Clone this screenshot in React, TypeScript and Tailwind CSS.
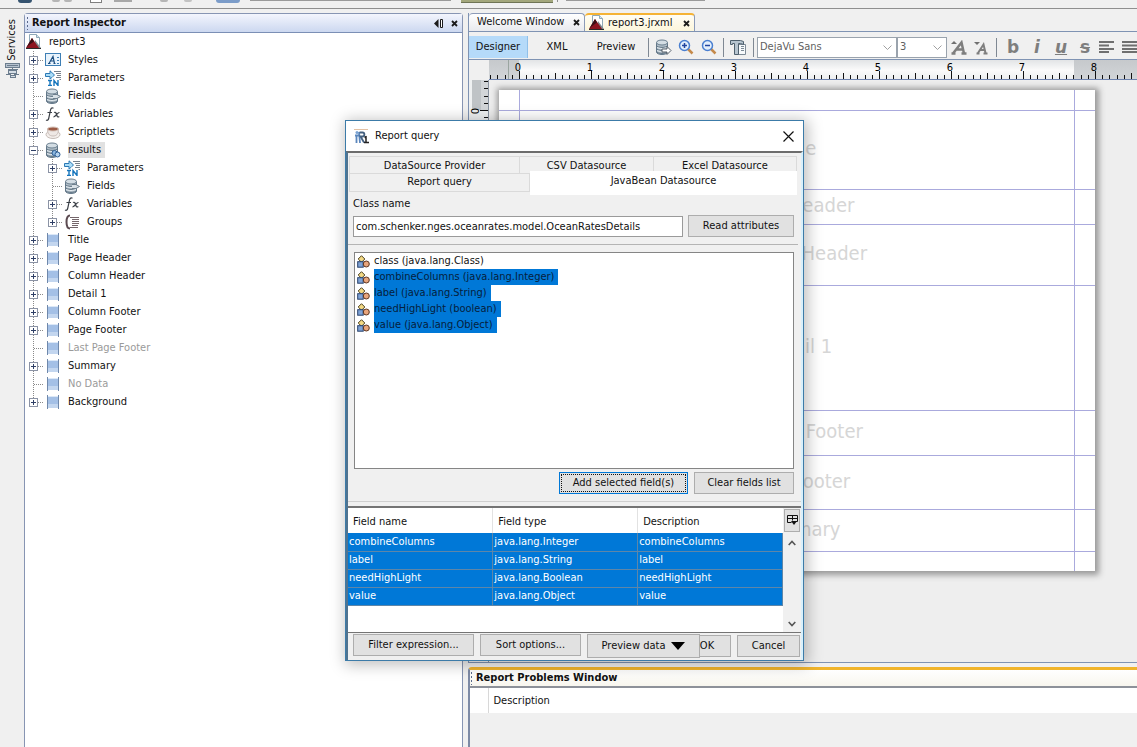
import React from 'react';
import { clsx } from 'clsx';

type IconName =
  | 'report' | 'styles' | 'params' | 'fields' | 'vars' | 'scriptlets' | 'dataset' | 'groups' | 'band';

interface TreeNode {
  label: string;
  icon: IconName;
  level: 1 | 2;
  box?: 'plus' | 'minus';
  last?: boolean;
  selected?: boolean;
  muted?: boolean;
}

const NODES: TreeNode[] = [
  { label: 'Styles', icon: 'styles', level: 1, box: 'plus' },
  { label: 'Parameters', icon: 'params', level: 1, box: 'plus' },
  { label: 'Fields', icon: 'fields', level: 1 },
  { label: 'Variables', icon: 'vars', level: 1, box: 'plus' },
  { label: 'Scriptlets', icon: 'scriptlets', level: 1, box: 'plus' },
  { label: 'results', icon: 'dataset', level: 1, box: 'minus', selected: true },
  { label: 'Parameters', icon: 'params', level: 2, box: 'plus' },
  { label: 'Fields', icon: 'fields', level: 2 },
  { label: 'Variables', icon: 'vars', level: 2, box: 'plus' },
  { label: 'Groups', icon: 'groups', level: 2, box: 'plus', last: true },
  { label: 'Title', icon: 'band', level: 1, box: 'plus' },
  { label: 'Page Header', icon: 'band', level: 1, box: 'plus' },
  { label: 'Column Header', icon: 'band', level: 1, box: 'plus' },
  { label: 'Detail 1', icon: 'band', level: 1, box: 'plus' },
  { label: 'Column Footer', icon: 'band', level: 1, box: 'plus' },
  { label: 'Page Footer', icon: 'band', level: 1, box: 'plus' },
  { label: 'Last Page Footer', icon: 'band', level: 1, muted: true },
  { label: 'Summary', icon: 'band', level: 1, box: 'plus' },
  { label: 'No Data', icon: 'band', level: 1, muted: true },
  { label: 'Background', icon: 'band', level: 1, box: 'plus', last: true },
];

const ATTRIBUTES = [
  { label: 'class (java.lang.Class)', selected: false },
  { label: 'combineColumns (java.lang.Integer)', selected: true },
  { label: 'label (java.lang.String)', selected: true },
  { label: 'needHighLight (boolean)', selected: true },
  { label: 'value (java.lang.Object)', selected: true },
];

const FIELDS = [
  ['combineColumns', 'java.lang.Integer', 'combineColumns'],
  ['label', 'java.lang.String', 'label'],
  ['needHighLight', 'java.lang.Boolean', 'needHighLight'],
  ['value', 'java.lang.Object', 'value'],
];

const BANDS = [
  { label: '', height: 'h-[21px]' },
  { label: 'Title', height: 'h-[79px]' },
  { label: 'Page Header', height: 'h-[35px]' },
  { label: 'Column Header', height: 'h-[61px]' },
  { label: 'Detail 1', height: 'h-[125px]' },
  { label: 'Column Footer', height: 'h-[45px]' },
  { label: 'Page Footer', height: 'h-[54px]' },
  { label: 'Summary', height: 'h-[42px]' },
];

const Cylinder: React.FC = () => (
  <>
    <path d="M1.5 3.5v9.5c0 1.500 2.500 2.500 5.500 2.500s5.500-1 5.500-2.500V3.500" fill="#b3c0ca" stroke="#64798a" />
    <path d="M1.500 6.500c1 2.500 10 2.500 11 0M1.500 9.500c1 2.500 10 2.500 11 0M1.500 12.500c1 2.500 10 2.500 11 0" fill="none" stroke="#5b7080" />
    <path d="M2 8c1 2 9 2 10 0M2 11c1 2 9 2 10 0" fill="none" stroke="#e4ebf0" />
    <ellipse cx="7" cy="3.500" rx="5.500" ry="2.500" fill="#d3dde4" stroke="#6a7e8e" />
  </>
);

const Icon: React.FC<{ name: IconName }> = ({ name }) => (
  <svg width="16" height="16" viewBox="0 0 16 16" className="shrink-0" aria-hidden="true">
    {name === 'report' && (
      <>
        <path d="M3.500.5h7l3 3v11h-10z" fill="#fff" stroke="#8fa9b8" />
        <path d="M10.500.5v3h3" fill="#d5e5ee" stroke="#8fa9b8" />
        <path d="M9 6l6 8H8z" fill="#7f8b8f" />
        <path d="M0 14L6 4l7 10z" fill="#8c1420" />
        <path d="M0 14L6 4l2 3.500L3 11z" fill="#3a1016" />
        <path d="M0 14.500h15" stroke="#2a2a2a" />
      </>
    )}
    {name === 'styles' && (
      <>
        <rect x=".5" y="1.500" width="15" height="12" fill="#e8f3fc" stroke="#3e7fb5" />
        <path d="M3 11.500h2.500M4 11.500L8 4.500l1.500 7M5.500 9h3.500M8.500 11.500h2" fill="none" stroke="#1d4f80" strokeWidth="1.200" />
        <path d="M12 5.500h2M12 8.500h2M12 11.500h2" stroke="#3e7fb5" />
      </>
    )}
    {name === 'params' && (
      <>
        <path d="M9 1.500h7M11 3.500h5M12 5.500h4M11 7.500h5M14.500 9.500h1.500" stroke="#77818c" />
        <path d="M.5 3.500h4.500V.8L9.500 5 5 9.200V6.500H.5z" fill="#a9dcf7" stroke="#2b78b5" />
        <path d="M3 10.500h4M5 10.500v5M3 15.500h4M9 15.500v-5l4 5v-5" fill="none" stroke="#fff" strokeWidth="3" />
        <path d="M3 10.500h4M5 10.500v5M3 15.500h4M9 16v-5.500l4 5v-5.500" fill="none" stroke="#1575bd" strokeWidth="1.400" />
      </>
    )}
    {name === 'fields' && (
      <>
        <Cylinder />
        <path d="M8 6.500h4l3.500 2-3.500 2H8" fill="#d9e1e7" stroke="#6d7f8d" />
      </>
    )}
    {name === 'vars' && (
      <path
        d="M8.500 2.200c-2-1-2.700.3-3.200 2.800l-1.500 7c-.4 1.800-1.200 2.800-2.800 2M2.500 6.500h4.500M9 6.500c2-.8 2 .5 2.700 2.500s1 2.500 2.600 1.500M14.500 6.500c-2-.5-3.500 4.500-6 4.300"
        fill="none"
        stroke="#3a3f46"
        strokeWidth="1.200"
      />
    )}
    {name === 'scriptlets' && (
      <>
        <ellipse cx="8" cy="10.500" rx="7" ry="4" fill="#f4efec" stroke="#c6bdb8" />
        <path d="M2.500 5c0 5 2 7 5.500 7s5.500-2 5.500-7z" fill="#eee8e5" stroke="#c9beb9" />
        <ellipse cx="8" cy="5" rx="5.500" ry="2" fill="#9c5b45" stroke="#d6c5bc" />
      </>
    )}
    {name === 'dataset' && (
      <>
        <Cylinder />
        <circle cx="9.500" cy="11" r="2.500" fill="#8db8e0" stroke="#2c5d94" />
        <circle cx="12.500" cy="12.500" r="2.500" fill="#b5d3ee" stroke="#2c5d94" />
      </>
    )}
    {name === 'groups' && (
      <>
        <path d="M6 1.500C3.500 1.500 2.500 3 2.500 8s1 6.500 3.500 6.500" fill="none" stroke="#5b4a50" strokeWidth="2" />
        <path d="M6 3.500h9M8 5.500h7M8 7.500h7M8 9.500h7M8 11.500h6M6 13.500h8" stroke="#74666b" />
      </>
    )}
    {name === 'band' && (
      <>
        <rect x="2" y="2" width="12" height="12" fill="#a4c0e6" />
        <path d="M2 2.500h12" stroke="#dce8f7" />
        <path d="M2 12h12" stroke="#c3d6ef" strokeWidth="4" />
        <path d="M2.500 1v14M13.500 1v14" stroke="#6f88ab" />
      </>
    )}
  </svg>
);

const Guide: React.FC<{ box?: 'plus' | 'minus'; branch?: boolean; last?: boolean }> = ({ box, branch, last }) => (
  <svg width="19" height="18" className="shrink-0" shapeRendering="crispEdges" aria-hidden="true">
    <path d={last ? 'M8.500 0v9' : 'M8.500 0v18'} stroke="#8a8a8a" strokeDasharray="1 1" />
    {branch && <path d="M9 9.500h10" stroke="#8a8a8a" strokeDasharray="1 1" />}
    {box && (
      <>
        <rect x="4.500" y="5.500" width="8" height="8" fill="#fff" stroke="#8b93a5" />
        <path d={box === 'plus' ? 'M6 9.500h5M8.500 7v5' : 'M6 9.500h5'} stroke="#2f3f66" />
      </>
    )}
  </svg>
);

const TreeRow: React.FC<{ node: TreeNode }> = ({ node }) => (
  <li className="flex h-[18px] items-center">
    {node.level === 2 && <Guide />}
    <Guide box={node.box} branch last={node.last} />
    <span className="w-6 shrink-0 pl-px">
      <Icon name={node.icon} />
    </span>
    <span className={clsx('leading-4', node.selected && 'bg-[#e1e1e1] pr-1', node.muted && 'text-[#9a9a9a]')}>
      {node.label}
    </span>
  </li>
);

const CloseGlyph: React.FC = () => (
  <svg width="7" height="7" aria-hidden="true">
    <path d="M1 1l5 5M6 1L1 6" stroke="#1b1b1b" strokeWidth="1.800" />
  </svg>
);

const Grip: React.FC = () => (
  <svg width="4" height="14" shapeRendering="crispEdges" className="shrink-0" aria-hidden="true">
    <path d="M1.500 1v13" stroke="#5b6a8c" strokeDasharray="2 2" />
  </svg>
);

const TopToolbar: React.FC = () => (
  <div className="flex h-[9px] shrink-0 items-start border-b border-[#8f8f8f] pl-[18px]">
    <div className="h-[3px] w-[14px] rounded-b bg-[#35536f]" />
    <div className="ml-5 h-[2px] w-2 rounded-b bg-[#b5b5b5]" />
    <div className="ml-1 h-[2px] w-2 rounded-b bg-[#b5b5b5]" />
    <div className="ml-[18px] h-[3px] w-[12px] border border-t-0 border-[#808080] bg-white" />
    <div className="ml-3 h-[2px] w-[18px] bg-[#a8a8a8]" />
    <div className="ml-7 h-[2px] w-2 rounded-b bg-[#b5b5b5]" />
    <div className="ml-4 h-[2px] w-2 rounded-b bg-[#c2c2c2]" />
    <div className="ml-6 h-[3px] w-[24px] rounded-b bg-[#7b9cc9]" />
    <div className="ml-[10px] h-px w-[201px] bg-[#9a9a9a]" />
    <div className="ml-[10px] h-[3px] w-[92px] border-b border-[#6f7556] bg-[#a3a77c]" />
    <div className="ml-1 h-[2px] w-px bg-[#8f8f8f]" />
    <div className="ml-2 h-px w-[139px] bg-[#9a9a9a]" />
  </div>
);

const ServicesBar: React.FC = () => (
  <aside className="flex w-6 shrink-0 flex-col items-center gap-[2px] pt-[10px]">
    <button className="rotate-180 leading-4 [writing-mode:vertical-rl]">Services</button>
    <svg width="15" height="16" shapeRendering="crispEdges" aria-hidden="true">
      <path d="M.5.500h14v4h-14z" fill="#b6c2cf" stroke="#6c7d8e" />
      <path d="M2 2.500h11M2.500 6.500h10M7.500 5v6" stroke="#6c7d8e" />
      <path d="M3.500 7.500h8v3h-8zM5.500 12.500h5v2h-5zM1 11.500h5M9 11.500h5" fill="#d6dee6" stroke="#6c7d8e" />
    </svg>
  </aside>
);

const Inspector: React.FC = () => (
  <section className="mt-1 flex w-[439px] shrink-0 flex-col rounded-t border border-b-0 border-[#8795b3] bg-white">
    <header className="flex h-[19px] shrink-0 items-center border-b border-[#7b8fb5] bg-gradient-to-b from-[#f3f5fd] to-[#ccd8f0] pr-1 pl-px">
      <Grip />
      <h2 className="ml-[2px] flex-1 font-bold">Report Inspector</h2>
      <button aria-label="Minimize" className="mr-2">
        <svg width="9" height="9" aria-hidden="true">
          <path d="M4.500 0v9L0 4.500z" fill="#1b1b1b" />
          <path d="M6.500.500h2v8h-2z" fill="#fff" stroke="#1b1b1b" />
        </svg>
      </button>
      <button aria-label="Close inspector"><CloseGlyph /></button>
    </header>
    <ul>
      <li className="flex h-[18px] items-center">
        <span className="w-6 shrink-0 pl-px"><Icon name="report" /></span>
        report3
      </li>
      {NODES.map((node, i) => <TreeRow key={i} node={node} />)}
    </ul>
  </section>
);

const Divider: React.FC = () => <span className="h-[19px] w-px shrink-0 bg-[#7f8893]" />;

const Zoomer: React.FC<{ plus?: boolean }> = ({ plus }) => (
  <svg width="16" height="16" aria-hidden="true">
    <path d="M9.500 9.500l5 5" stroke="#c58a4b" strokeWidth="2.500" />
    <circle cx="6.500" cy="6.500" r="5" fill="#e3effc" stroke="#4a7fd0" strokeWidth="1.500" />
    <path d={plus ? 'M4 6.500h5M6.500 4v5' : 'M4 6.500h5'} stroke="#2145a0" strokeWidth="1.500" />
  </svg>
);

const Picker: React.FC<{ label: string; value: string; className: string }> = ({ label, value, className }) => (
  <div className={clsx('relative h-[21px] shrink-0', className)}>
    <select
      aria-label={label}
      defaultValue={value}
      className="h-full w-full appearance-none border border-[#9aa3ad] bg-white pl-[2px] text-[#5f5f5f]"
    >
      <option>{value}</option>
    </select>
    <svg width="9" height="6" className="pointer-events-none absolute top-2 right-[5px]" aria-hidden="true">
      <path d="M.5.500l4 4 4-4" fill="none" stroke="#a0a0a0" />
    </svg>
  </div>
);

const glyphButton = 'w-6 shrink-0 text-center font-["DejaVu_Sans"] text-[17px] leading-5 font-bold text-[#7e7e7e]';

const DesignerToolbar: React.FC = () => (
  <div className="flex h-[29px] shrink-0 items-center overflow-hidden border-y border-[#7f93b3] bg-[#f0f0f0] pt-[3px]">
    <button className="h-[22px] w-[59px] shrink-0 border-r border-[#8fc0ea] bg-[#b5daf9]">Designer</button>
    <button className="h-[22px] w-[58px] shrink-0">XML</button>
    <button className="h-[22px] w-[60px] shrink-0">Preview</button>
    <div className="flex shrink-0 items-center pl-[2px]">
      <Divider />
      <button aria-label="Report query" className="ml-[6px]">
        <svg width="17" height="16" viewBox="0 0 17 16" aria-hidden="true">
          <Cylinder />
          <path d="M7 10h5V7.500l4 4-4 4V13H7z" fill="#fff" stroke="#555f69" />
        </svg>
      </button>
      <button aria-label="Zoom in" className="ml-[6px]"><Zoomer plus /></button>
      <button aria-label="Zoom out" className="mr-[6px] ml-[7px]"><Zoomer /></button>
      <Divider />
      <button aria-label="Format tools" className="mx-[6px]">
        <svg width="17" height="17" aria-hidden="true">
          <path d="M7.500 5.500h8v10h-8z" fill="#f7fafc" stroke="#7d8a96" />
          <path d="M.5 1.500h10l3 1v3l-3-1h-2v11h-4v-11h-2v1h-2z" fill="#b7c5d0" stroke="#4e606e" />
          <path d="M11 7.500h3M11 9.500h3M11 11.500h3" stroke="#7d8a96" />
        </svg>
      </button>
      <Divider />
    </div>
    <div className="ml-[3px] flex shrink-0">
      <Picker label="Font" value="DejaVu Sans" className="w-[140px]" />
      <Picker label="Size" value="3" className="w-[50px]" />
    </div>
    <button aria-label="Increase font size" className="ml-[4px] w-[18px] shrink-0">
      <svg width="16" height="15" aria-hidden="true">
        <path d="M0 4l3-3 3 3z" fill="#707070" />
        <path d="M2 13.500L10.500 2.500l2.500 11M5.500 9.500h7M.5 13.500h4M10.500 13.500h5" fill="none" stroke="#7e7e7e" strokeWidth="2.500" />
      </svg>
    </button>
    <button aria-label="Decrease font size" className="ml-[5px] w-[18px] shrink-0">
      <svg width="15" height="15" aria-hidden="true">
        <path d="M0 2h6L3 5z" fill="#707070" />
        <path d="M4 13L9.500 4.500l2 8.500M6 10h5.500M2.500 13.500h3M9.500 13.500h4" fill="none" stroke="#7e7e7e" strokeWidth="2" />
      </svg>
    </button>
    <span className="mx-[4px] flex"><Divider /></span>
    <button aria-label="Bold" className={glyphButton}>b</button>
    <button aria-label="Italic" className={clsx(glyphButton, 'italic')}>i</button>
    <button aria-label="Underline" className={clsx(glyphButton, 'italic underline')}>u</button>
    <button aria-label="Strikethrough" className={clsx(glyphButton, 'line-through')}>s</button>
    <button aria-label="Align left" className="ml-[2px] shrink-0">
      <svg width="15" height="12" aria-hidden="true">
        <path d="M0 1h15M0 4.500h10M0 8h15M0 11h10" stroke="#6f6f6f" strokeWidth="2" />
      </svg>
    </button>
    <button aria-label="Justify" className="ml-[8px] shrink-0">
      <svg width="15" height="12" aria-hidden="true">
        <path d="M0 1h15M0 4.500h15M0 8h15M0 11h15" stroke="#6f6f6f" strokeWidth="2" />
      </svg>
    </button>
  </div>
);

const INCH = 72;

const HorizontalRuler: React.FC = () => {
  const ticks = Array.from({ length: 91 }, (_, i) => i - 4);
  return (
    <svg width="100%" height="20" className="block" shapeRendering="crispEdges" aria-hidden="true">
      <defs>
        <linearGradient id="ruler" x1="0" y1="0" x2="0" y2="1">
          <stop offset="0" stopColor="#e2e4e6" />
          <stop offset="0.500" stopColor="#fafafa" />
          <stop offset="1" stopColor="#eceeef" />
        </linearGradient>
        <linearGradient id="margin" x1="0" y1="0" x2="0" y2="1">
          <stop offset="0" stopColor="#c6c9cc" />
          <stop offset="1" stopColor="#d2d5d8" />
        </linearGradient>
      </defs>
      <rect width="100%" height="20" fill="url(#ruler)" />
      <rect width="30" height="20" fill="url(#margin)" />
      <rect x="585" width="1000" height="20" fill="url(#margin)" />
      <path d="M19.500 0v20" stroke="#9aa5a0" />
      <path d="M0 19.500h1600" stroke="#6f84b0" />
      {ticks.map((t) => {
        const x = Math.round(30 + (t * INCH) / 10) + 0.5;
        const top = t % 10 === 0 ? 11 : t % 5 === 0 ? 13 : 15;
        return <path key={t} d={`M${x} ${top}V19`} stroke="#111" />;
      })}
      {[0, 1, 2, 3, 4, 5, 6, 7, 8].map((n) => (
        <text key={n} x={29 + n * INCH} y="11" textAnchor="middle" className="fill-black text-[11px]">{n}</text>
      ))}
    </svg>
  );
};

const VerticalRuler: React.FC = () => (
  <svg width="20" height="582" className="shrink-0 bg-[#eef0f1]" shapeRendering="crispEdges" aria-hidden="true">
    <rect x="3" width="9" height="30" fill="#bfc3c6" />
    <rect x="12" width="7" height="30" fill="#d2d5d8" />
    <path d="M19.500 0v582" stroke="#8a93a0" />
    {Array.from({ length: 80 }, (_, i) => i - 4).map((t) => {
      const y = Math.round(30 + (t * INCH) / 10) + 0.5;
      const left = t % 10 === 0 ? 11 : 15;
      return <path key={t} d={`M${left} ${y}H19`} stroke="#111" />;
    })}
    {[0, 1, 2, 3, 4, 5, 6, 7].map((n) => (
      <text key={n} transform={`translate(10 ${31 + n * INCH}) rotate(-90)`} textAnchor="middle" className="fill-black text-[11px]">
        {n}
      </text>
    ))}
  </svg>
);

// Report page: bands separated by guide lines, with the side margins drawn as columns
const ReportPage: React.FC = () => (
  <div className="mt-[10px] ml-[10px] flex h-[481px] w-[596px] shrink-0 bg-white shadow-[1px_1px_6px_3px_#999999]">
    <div className="flex w-full flex-col">
      {BANDS.map((band) => (
        <div key={band.label} className={clsx('flex shrink-0 border-b border-[#aaaadd]', band.height)}>
          <div className="w-[21px] shrink-0 border-r border-[#aaaadd]" />
          <div className="flex flex-1 items-center justify-center pb-1 text-xl leading-6 text-[#d6d6d6]">{band.label}</div>
          <div className="w-[21px] shrink-0 border-l border-[#aaaadd]" />
        </div>
      ))}
      <div className="flex flex-1">
        <div className="w-[21px] border-r border-[#aaaadd]" />
        <div className="flex-1" />
        <div className="w-[21px] border-l border-[#aaaadd]" />
      </div>
    </div>
  </div>
);

const Editor: React.FC = () => (
  <section className="flex h-[650px] min-w-0 shrink-0 flex-col border-b border-l border-[#7f93b3]">
    <div className="flex h-[18px] shrink-0 items-stretch">
      <div className="flex w-[116px] items-center justify-between rounded-t border border-b-0 border-l-0 border-[#8b9ab8] bg-gradient-to-b from-white to-[#e9eaee] pr-1 pl-2">
        <button>Welcome Window</button>
        <button aria-label="Close Welcome Window"><CloseGlyph /></button>
      </div>
      <div className="flex w-[110px] items-center rounded-t border-t-2 border-r border-t-[#f5b335] border-r-[#8b9ab8] bg-gradient-to-b from-[#fffdf5] to-[#fdf6da] pr-1 pl-1">
        <Icon name="report" />
        <button className="ml-[3px] flex-1 text-left">report3.jrxml</button>
        <button aria-label="Close report3.jrxml"><CloseGlyph /></button>
      </div>
    </div>
    <DesignerToolbar />
    <div className="flex shrink-0">
      <div className="w-5 shrink-0" />
      <div className="min-w-0 flex-1"><HorizontalRuler /></div>
    </div>
    <div className="flex min-h-0 flex-1">
      <VerticalRuler />
      <div className="min-w-0 flex-1 overflow-hidden bg-[#eeeeee]"><ReportPage /></div>
    </div>
  </section>
);

const ProblemsWindow: React.FC = () => (
  <section className="mt-1 flex flex-1 flex-col rounded-tl border-t-[3px] border-l-2 border-t-[#f0b42c] border-l-[#7d8aa5] bg-[#f0f0f0]">
    <header className="flex h-[18px] shrink-0 items-center border-b-2 border-[#8d9199] bg-gradient-to-b from-white to-[#f8f6ee]">
      <Grip />
      <h2 className="ml-[2px] font-bold">Report Problems Window</h2>
    </header>
    <table className="w-full border-collapse">
      <thead>
        <tr className="h-[25px] bg-white">
          <th className="w-[18px] border-r border-[#d8d8d8]" aria-label="Severity" />
          <th className="pt-[2px] pl-[5px] text-left font-normal">Description</th>
        </tr>
      </thead>
    </table>
  </section>
);

interface PushButtonProps {
  children: React.ReactNode;
  className: string;
}

const PushButton: React.FC<PushButtonProps> = ({ children, className }) => (
  <button className={clsx('flex shrink-0 items-center justify-center border border-[#adadad] bg-[#e1e1e1]', className)}>
    {children}
  </button>
);

const BeanIcon: React.FC = () => (
  <svg width="13" height="13" className="shrink-0" aria-hidden="true">
    <path d="M4.500.700L7.800 4 4.500 7.300 1.200 4z" fill="#f3d984" stroke="#4a3f1d" />
    <rect x=".7" y="6.700" width="5.500" height="5.500" fill="#7fa3d6" stroke="#27406b" />
    <circle cx="9.300" cy="9" r="3" fill="#e8a57c" stroke="#5e3520" />
  </svg>
);

const tab = 'flex shrink-0 items-center justify-center border border-[#dadada] bg-[#f0f0f0]';

const QueryDialog: React.FC = () => (
  <div
    role="dialog"
    aria-labelledby="dialog-title"
    className="absolute top-[120px] left-[345px] flex h-[541px] w-[459px] flex-col border border-[#3c7ba8] bg-[#f0f0f0] shadow-[2px_2px_14px_2px_#00000040]"
  >
    <header className="flex h-[30px] shrink-0 items-center bg-white pr-[9px] pl-[8px]">
      <svg width="15" height="16" aria-hidden="true">
        <path d="M0 1.500h14" stroke="#e3c1a4" />
        <path d="M2.500 15V7M1 7.500h4M5 4l1 11" stroke="#5b87bd" strokeWidth="1.800" fill="none" />
        <path d="M5.500 4.500h3c2.500 0 2.500 4 0 4h-2l3.500 6" fill="none" stroke="#44607f" strokeWidth="1.800" />
        <path d="M12 8v6M10 14.500h5M10.500 9.500l2-1" stroke="#222" strokeWidth="1.500" fill="none" />
        <circle cx="3" cy="4.500" r="1.500" fill="#7aa2d2" />
      </svg>
      <h1 id="dialog-title" className="ml-[6px] flex-1">Report query</h1>
      <button aria-label="Close dialog">
        <svg width="11" height="11" className="block" aria-hidden="true">
          <path d="M.5.500l10 10M10.500.500l-10 10" stroke="#111" strokeWidth="1.200" />
        </svg>
      </button>
    </header>
    <div className="flex min-h-0 flex-1 flex-col border-t-2 border-r-2 border-l-2 border-t-[#6c6c6c] border-r-[#d8f0fb] border-l-[#4f7390]">
      <div role="tablist" className="mx-px mt-[3px] shrink-0 pr-[3px]">
        <div className="flex h-[18px]">
          <button role="tab" className={clsx(tab, 'w-[171px] pt-[2px]')}>DataSource Provider</button>
          <button role="tab" className={clsx(tab, 'w-[134px] border-l-0 pt-[2px]')}>CSV Datasource</button>
          <button role="tab" className={clsx(tab, 'flex-1 border-l-0 pt-[2px]')}>Excel Datasource</button>
        </div>
        <div className="-mt-[3px] flex h-[24px]">
          <button role="tab" className={clsx(tab, 'mt-[2px] h-[19px] w-[181px]')}>Report query</button>
          <button role="tab" aria-selected="true" className="relative flex-1 bg-white pb-[4px]">JavaBean Datasource</button>
        </div>
      </div>
      <div className="flex shrink-0 flex-col pr-[7px] pl-[5px]">
        <label htmlFor="class-name" className="mt-px leading-4">Class name</label>
        <div className="mt-[3px] flex items-center justify-between">
          <input
            id="class-name"
            defaultValue="com.schenker.nges.oceanrates.model.OceanRatesDetails"
            className="h-[21px] w-[330px] border border-[#9a9a9a] bg-white px-[2px]"
          />
          <PushButton className="h-[22px] w-[106px]">Read attributes</PushButton>
        </div>
      </div>
      <div className="mt-[7px] mr-[3px] h-px shrink-0 bg-[#b4b4b4]" />
      <ul className="mt-[7px] mr-[7px] ml-[6px] h-[217px] shrink-0 border border-[#858585] bg-white">
        {ATTRIBUTES.map((attribute) => (
          <li key={attribute.label} className="flex h-4 items-center pl-[2px]">
            <BeanIcon />
            <span className={clsx('ml-1 h-4 pr-1 leading-4', attribute.selected && 'bg-[#0078d7] text-[#06203c]')}>
              {attribute.label}
            </span>
          </li>
        ))}
      </ul>
      <div className="mt-[3px] mr-[7px] flex shrink-0 justify-end gap-[6px]">
        <button className="h-[22px] w-[129px] border border-[#0078d7] bg-[#e1e1e1] p-px">
          <span className="flex h-full items-center justify-center border border-dotted border-[#111]">
            Add selected field(s)
          </span>
        </button>
        <PushButton className="h-[22px] w-[100px]">Clear fields list</PushButton>
      </div>
      <div className="mt-[7px] h-[5px] shrink-0 border-t border-[#cfcfcf]" />
      <div className="flex h-[127px] shrink-0 border-t-2 border-b border-[#747474] bg-white">
        <div className="flex-1">
          <table className="w-full table-fixed border-collapse">
            <thead>
              <tr className="h-[25px]">
                {['Field name', 'Field type', 'Description'].map((heading) => (
                  <th key={heading} className="border-r border-[#e2e2e2] pt-[3px] pl-[5px] text-left font-normal last:border-r-0">
                    {heading}
                  </th>
                ))}
              </tr>
            </thead>
            <tbody>
              {FIELDS.map((row) => (
                <tr key={row[0]} className="h-[18px] border-b border-[#5e86a8] bg-[#0078d7] text-white">
                  {row.map((cell, i) => (
                    <td key={i} className="border-r border-[#5e86a8] pl-px leading-4">{cell}</td>
                  ))}
                </tr>
              ))}
            </tbody>
          </table>
        </div>
        <div className="flex w-[18px] shrink-0 flex-col items-center bg-[#f0f0f0]">
          <PushButton className="mt-px h-[23px] w-4">
            <svg width="11" height="11" aria-label="Columns">
              <path d="M.5.500h10v6h-3M.5.500v7h4M.5 3.500h10M5.500.500v5" fill="none" stroke="#111" />
              <path d="M4 6h6L7 10z" fill="#111" />
            </svg>
          </PushButton>
          <button aria-label="Scroll up" className="mt-[8px]">
            <svg width="8" height="6" className="block" aria-hidden="true">
              <path d="M.7 5L4 1.500 7.300 5" fill="none" stroke="#555" strokeWidth="1.600" />
            </svg>
          </button>
          <button aria-label="Scroll down" className="mt-auto mb-[5px]">
            <svg width="8" height="6" className="block" aria-hidden="true">
              <path d="M.7 1L4 4.500 7.300 1" fill="none" stroke="#555" strokeWidth="1.600" />
            </svg>
          </button>
        </div>
      </div>
      <footer className="flex items-start pt-px pl-[5px]">
        <PushButton className="h-[22px] w-[121px]">Filter expression...</PushButton>
        <PushButton className="ml-[6px] h-[22px] w-[101px]">Sort options...</PushButton>
        <PushButton className="ml-[6px] h-[24px] w-[113px] gap-[6px]">
          Preview data
          <svg width="14" height="8" aria-hidden="true"><path d="M0 0h14L7 8z" /></svg>
        </PushButton>
        <PushButton className="mt-px h-[22px] w-[31px] border-l-0 pr-4">OK</PushButton>
        <PushButton className="mt-px ml-[6px] h-[22px] w-[63px]">Cancel</PushButton>
      </footer>
    </div>
  </div>
);

const App: React.FC = () => (
  <main className='relative flex h-screen flex-col overflow-hidden bg-[#f0f0f0] font-["DejaVu_Sans_Condensed","DejaVu_Sans",sans-serif] text-[11px] text-[#111]'>
    <TopToolbar />
    <div className="flex min-h-0 flex-1">
      <ServicesBar />
      <Inspector />
      <div className="mt-1 ml-[5px] flex min-w-0 flex-1 flex-col">
        <Editor />
        <ProblemsWindow />
      </div>
    </div>
    <QueryDialog />
  </main>
);

export default App;
